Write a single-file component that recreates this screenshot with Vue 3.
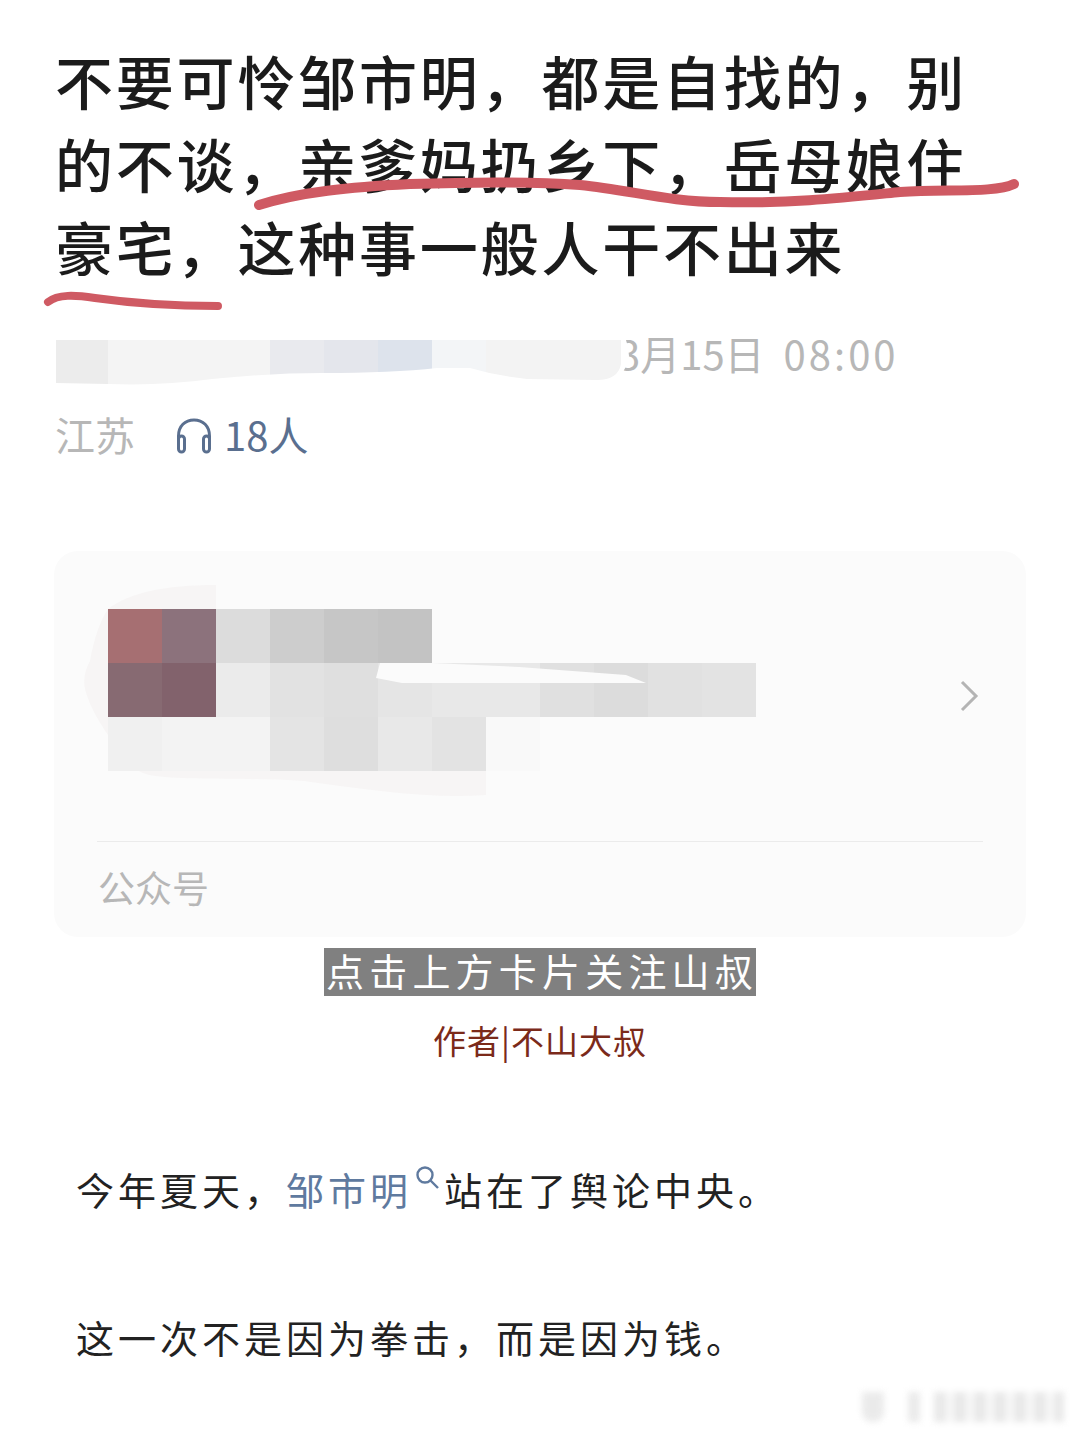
<template>
  <div class="page">
    <h1 class="title">不要可怜邹市明&#xFF0C;都是自找的&#xFF0C;别的不谈&#xFF0C;亲爹妈扔乡下&#xFF0C;岳母娘住豪宅&#xFF0C;这种事一般人干不出来</h1>

    <div class="date-row">
      <span class="date">3月15日<span class="time">08:00</span></span>
      <svg class="redact-date" width="580" height="76" viewBox="0 0 580 76">
        <path d="M2 40 Q2 8 30 8 L560 6 Q575 14 577 40 Q572 68 545 68 L470 68 Q440 64 425 56 L340 60 Q260 60 200 64 Q110 76 60 74 L2 70 Z" fill="#ffffff" />
        <g clip-path="url(#dateClip)">
          <rect v-for="c in dateCells" :key="c.x" :x="c.x" y="24" :width="c.w" height="46" :fill="c.fill" shape-rendering="crispEdges" />
        </g>
        <clipPath id="dateClip">
          <path d="M4 24 L569 24 L569 48 Q566 64 545 64 L475 63 Q445 60 418 52 L385 52 Q340 57 270 57 Q220 57 160 63 Q110 70 56 68 L4 67 Z" />
        </clipPath>
      </svg>
    </div>

    <div class="loc-row">
      <span class="loc">江苏</span>
      <svg class="phones" width="38" height="36" viewBox="0 0 38 36" fill="none" stroke="#5a6f8f" stroke-width="3">
        <path d="M3.500 26 V18 C3.500 8 10 2 19 2 C28 2 34.500 8 34.500 18 V26" />
        <rect x="3.500" y="18" width="6" height="16" rx="3" />
        <rect x="28.500" y="18" width="6" height="16" rx="3" />
      </svg>
      <span class="count">18人</span>
    </div>

    <section class="card">
      <div class="card-top">
        <svg class="mosaic" width="750" height="240" viewBox="0 0 750 240">
          <path d="M54 24 C75 8 110 0 162 0 L162 100 L432 100 L432 210 C380 214 320 206 250 196 C190 192 130 196 95 190 Q62 180 54 150 Q36 124 31 104 Q28 90 36 76 Q42 42 54 24 Z" fill="#f7f5f5" />
          <rect v-for="(c, i) in cells" :key="i" :x="c.x" :y="c.y" width="54" height="54" :fill="c.fill" shape-rendering="crispEdges" />
          <path d="M326 78 L378 78 L465 82 L572 90 L592 98 L348 98 L322 93 Z" fill="#fbfbfb" />
        </svg>
        <svg class="chevron" width="20" height="32" viewBox="0 0 20 32" fill="none" stroke="#b4b4b4" stroke-width="3">
          <path d="M3 2 L17 16 L3 30" />
        </svg>
      </div>
      <div class="card-foot">公众号</div>
    </section>

    <div class="tip-wrap"><span class="tip">点击上方卡片关注山叔</span></div>
    <p class="author">作者|不山大叔</p>

    <p class="para first">今年夏天&#xFF0C;<span class="link">邹市明</span><svg class="search" width="26" height="26" viewBox="0 0 26 26" fill="none" stroke="#5f7a9f" stroke-width="2.400"><circle cx="11" cy="10" r="7.500" /><path d="M16.500 15.500 L24 23" /></svg>站在了舆论中央。</p>
    <p class="para second">这一次不是因为拳击&#xFF0C;而是因为钱。</p>

    <!-- redline marks drawn over the title -->
    <svg class="marks" width="1080" height="330" viewBox="0 0 1080 330" fill="none" stroke="#cf5a63" stroke-linecap="round" stroke-linejoin="round">
      <path d="M259 205 C300 192 350 187 410 184 C470 182 540 182 580 185 C630 190 670 202 720 202 C790 204 850 197 900 192 C950 189 995 193 1014 184" stroke-width="10" />
      <path d="M48 302 C58 294 75 295 95 298 C130 303 170 306 218 306" stroke-width="8" />
    </svg>

    <div class="watermark">
      <i class="mark-a"></i><i class="mark-b"></i><i class="mark-c"></i>
    </div>
  </div>
</template>

<script setup>
const dateCells = [
  { x: 4, w: 52, fill: '#ececec' },
  { x: 56, w: 162, fill: '#f4f4f4' },
  { x: 218, w: 54, fill: '#e9eaee' },
  { x: 272, w: 54, fill: '#e4e6ec' },
  { x: 326, w: 54, fill: '#dde3ec' },
  { x: 380, w: 54, fill: '#f3f5f7' },
  { x: 434, w: 140, fill: '#f3f3f3' }
]

const rows = [
  ['#a66f72', '#8c727c', '#dcdcdc', '#cdcdcd', '#c6c6c6', '#c3c3c3'],
  ['#876a72', '#82626c', '#ebebeb', '#e2e2e2', '#dfdfdf', '#e5e5e5', '#e8e8e8', '#e8e8e8', '#e0e0e0', '#dcdcdc', '#e1e1e1', '#e3e3e3'],
  ['#f0f0f0', '#f3f3f3', '#f3f3f3', '#e4e4e4', '#dedede', '#e8e8e8', '#e3e3e3', '#f9f9f9']
]

// mosaic starts at card-top inner offset
const cells = rows.flatMap((row, r) =>
  row.map((fill, c) => ({ x: 54 + c * 54, y: 24 + r * 54, fill }))
)
</script>

<style>
html, body {
  margin: 0;
  background: #fff;
}
</style>

<style scoped>
.page {
  position: relative;
  width: 1080px;
  height: 1433px;
  overflow: hidden;
  padding-top: 39px;
  box-sizing: border-box;
  background: #fff;
  font-family: "Noto Sans CJK SC", "Noto Sans", sans-serif;
}
.title {
  margin: 0;
  padding-left: 55px;
  width: 925px;
  font-size: 58px;
  line-height: 83px;
  font-weight: 500;
  letter-spacing: 2.800px;
  color: #1b1b1b;
}
.date-row {
  position: relative;
  margin-top: 35px;
  height: 60px;
  padding-left: 618px;
}
.date {
  font-size: 40px;
  line-height: 60px;
  color: #b7b7b7;
}
.time {
  margin-left: 19px;
  letter-spacing: 3px;
}
.redact-date {
  position: absolute;
  left: 52px;
  top: -7px;
}
.loc-row {
  display: flex;
  align-items: center;
  margin-top: 21px;
  height: 60px;
  padding-left: 55px;
}
.loc {
  font-size: 40px;
  color: #b7b7b7;
}
.phones {
  margin-left: 40px;
  margin-top: 3px;
}
.count {
  margin-left: 11px;
  font-size: 40px;
  color: #5a6f8f;
}
.card {
  margin: 87px 54px 0;
  height: 386px;
  box-sizing: border-box;
  border-radius: 24px;
  background: #fbfbfb;
  padding: 0 43px;
}
.card-top {
  position: relative;
  height: 290px;
  border-bottom: 1px solid #ebebeb;
}
.mosaic {
  position: absolute;
  left: -43px;
  top: 34px;
}
.chevron {
  position: absolute;
  right: 4px;
  top: 129px;
}
.card-foot {
  padding-left: 1px;
  font-size: 37px;
  line-height: 90px;
  color: #b7b7b7;
}
.tip-wrap {
  margin-top: 11px;
  height: 48px;
  display: flex;
  justify-content: center;
}
.tip {
  display: block;
  width: 432px;
  height: 48px;
  padding-left: 2px;
  box-sizing: border-box;
  background: #808080;
  color: #fff;
  font-size: 38px;
  line-height: 44px;
  letter-spacing: 5.200px;
  white-space: nowrap;
}
.author {
  margin: 19px 0 0;
  text-align: center;
  font-size: 33px;
  line-height: 50px;
  letter-spacing: 1px;
  color: #7b2a1a;
}
.para {
  margin: 0;
  padding-left: 76px;
  font-size: 38px;
  line-height: 60px;
  letter-spacing: 4px;
  color: #222;
  white-space: nowrap;
}
.first {
  margin-top: 94px;
}
.second {
  margin-top: 88px;
}
.link {
  color: #5f7a9f;
}
.search {
  margin-left: 2px;
  margin-right: 4px;
  vertical-align: 14px;
}
.marks {
  position: absolute;
  left: 0;
  top: 0;
  pointer-events: none;
}
.watermark {
  position: absolute;
  left: 860px;
  top: 1392px;
  width: 210px;
  height: 30px;
  filter: blur(3px);
  opacity: 0.8;
}
.watermark i {
  position: absolute;
  top: 0;
  height: 30px;
  background: #e6e6e6;
}
.mark-a {
  left: 2px;
  width: 22px;
  border-radius: 0 0 10px 10px;
}
.mark-b {
  left: 48px;
  width: 12px;
}
.mark-c {
  left: 74px;
  width: 130px;
  background: repeating-linear-gradient(90deg, #e4e4e4 0 12px, #f6f6f6 12px 20px) !important;
}
</style>
